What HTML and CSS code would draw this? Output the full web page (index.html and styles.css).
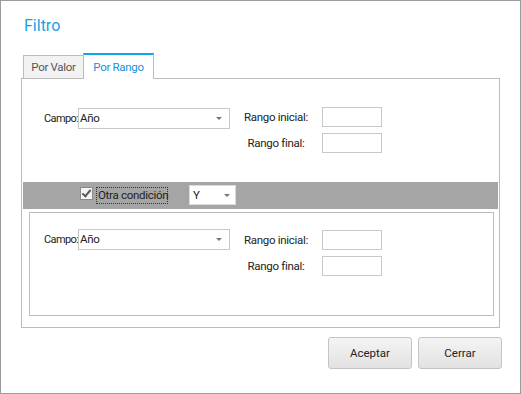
FILE: index.html
```html
<!DOCTYPE html>
<html lang="es">

<head>
    <meta charset="UTF-8">
    <meta name="viewport" content="width=device-width, initial-scale=1.0">
    <title>Filtro</title>
    <link rel="stylesheet" href="styles.css">
</head>

<body>
    <div class="dialog">
        <h1 class="title">Filtro</h1>

        <!-- Tabs -->
        <div class="tabs">
            <div class="tab">Por Valor</div>
            <div class="tab active">Por Rango</div>
        </div>

        <div class="panel">
            <!-- First condition -->
            <div class="cond">
                <div class="campo">
                    <span class="campo-label">Campo:</span>
                    <div class="select">Año</div>
                </div>
                <div class="rangos">
                    <label class="rango-label">Rango inicial:</label>
                    <input type="text" class="rango-input">
                    <label class="rango-label">Rango final:</label>
                    <input type="text" class="rango-input">
                </div>
            </div>

            <!-- Extra condition toggle -->
            <div class="bar">
                <span class="check"></span>
                <span class="check-label">Otra condición</span>
                <div class="select select-small">Y</div>
            </div>

            <!-- Second condition -->
            <div class="subbox">
                <div class="cond cond-sub">
                    <div class="campo">
                        <span class="campo-label">Campo:</span>
                        <div class="select">Año</div>
                    </div>
                    <div class="rangos">
                        <label class="rango-label">Rango inicial:</label>
                        <input type="text" class="rango-input">
                        <label class="rango-label">Rango final:</label>
                        <input type="text" class="rango-input">
                    </div>
                </div>
            </div>
        </div>

        <div class="actions">
            <button class="btn">Aceptar</button>
            <button class="btn">Cerrar</button>
        </div>
    </div>
</body>

</html>
```

FILE: styles.css
```css
body {
    margin: 0;
    padding: 0;
    background-color: white;
    font-family: Roboto, 'Liberation Sans', sans-serif;
    font-size: 11.5px;
    letter-spacing: -0.3px;
    color: #222;
}

.dialog {
    width: 521px;
    height: 394px;
    box-sizing: border-box;
    border: 1px solid #9c9c9c;
    padding: 0 20px;
}

.title {
    margin: 15px 0 0 3px;
    font-size: 16px;
    font-weight: normal;
    letter-spacing: 0;
    line-height: 20px;
    color: #1a9fe3;
}

/* Tabs */
.tabs {
    display: flex;
    align-items: flex-end;
    margin: 17px 0 -1px 2px;
    position: relative;
    z-index: 1;
}

.tab {
    width: 60px;
    height: 24px;
    box-sizing: border-box;
    border: 1px solid #bcbcbc;
    border-right: none;
    background-color: #f2f2f2;
    line-height: 22px;
    text-align: center;
    color: #555;
}

.tab.active {
    width: 71px;
    height: 26px;
    border: 1px solid #bcbcbc;
    border-top: 2px solid #0ea5ef;
    border-bottom: none;
    background-color: white;
    line-height: 24px;
    color: #1a8fd8;
}

/* Panel */
.panel {
    height: 250px;
    box-sizing: border-box;
    border: 1px solid #bcbcbc;
    padding-top: 28px;
}

.cond {
    display: flex;
    align-items: flex-start;
    padding-left: 22px;
}

.campo {
    display: flex;
    align-items: center;
    margin-top: 1px;
}

.campo-label {
    width: 34px;
    font-size: 11px;
    letter-spacing: -0.6px;
    white-space: nowrap;
}

.select {
    position: relative;
    width: 152px;
    height: 21px;
    box-sizing: border-box;
    border: 1px solid #c8c8c8;
    background-color: white;
    padding: 0 1px;
    line-height: 19px;
}

.select::after {
    content: '';
    position: absolute;
    right: 7px;
    top: 8px;
    border-left: 3px solid transparent;
    border-right: 3px solid transparent;
    border-top: 3px solid #777;
}

.rangos {
    display: grid;
    grid-template-columns: 92px 60px;
    grid-auto-rows: 20px;
    row-gap: 6px;
}

.rango-label {
    line-height: 20px;
    text-align: center;
    white-space: nowrap;
}

.rango-input {
    width: 60px;
    height: 20px;
    box-sizing: border-box;
    margin: 0;
    border: 1px solid #c8c8c8;
    padding: 0 2px;
    font: inherit;
}

/* Gray condition bar */
.bar {
    display: flex;
    align-items: flex-start;
    height: 27px;
    margin: 29px 1px 0;
    padding-left: 57px;
    background-color: #a5a5a5;
}

.check {
    position: relative;
    width: 13px;
    height: 13px;
    box-sizing: border-box;
    margin-top: 5px;
    border: 1px solid #8a8a8a;
    background-color: #f4f4f4;
}

.check::after {
    content: '';
    position: absolute;
    left: 3px;
    top: 0;
    width: 3px;
    height: 7px;
    border-right: 2px solid #5a5a5a;
    border-bottom: 2px solid #5a5a5a;
    transform: rotate(40deg);
}

.check-label {
    width: 72px;
    height: 17px;
    box-sizing: border-box;
    margin: 5px 0 0 3px;
    border: 1px dotted #333;
    padding: 0 1px;
    line-height: 15px;
    white-space: nowrap;
}

.select-small {
    width: 47px;
    height: 20px;
    margin: 3px 0 0 21px;
    border-color: #dcdcdc;
    padding-left: 3px;
    line-height: 18px;
}

.select-small::after {
    top: 8px;
    right: 5px;
}

/* Second condition box */
.subbox {
    height: 104px;
    box-sizing: border-box;
    margin: 3px 5px 0 7px;
    border: 1px solid #bcbcbc;
    padding-top: 16px;
}

.cond-sub {
    padding-left: 14px;
}

.cond-sub .campo {
    margin-top: 0;
}

.cond-sub .rangos {
    margin-top: 1px;
}

/* Buttons */
.actions {
    display: flex;
    justify-content: flex-end;
    gap: 6px;
    margin: 9px -2px 0 0;
}

.btn {
    width: 84px;
    height: 32px;
    border: 1px solid #c4c4c4;
    border-radius: 3px;
    background: linear-gradient(#f4f4f4, #e2e2e2);
    font: inherit;
    color: #222;
    cursor: pointer;
}

.btn:hover {
    background: linear-gradient(#f8f8f8, #e8e8e8);
}
```
